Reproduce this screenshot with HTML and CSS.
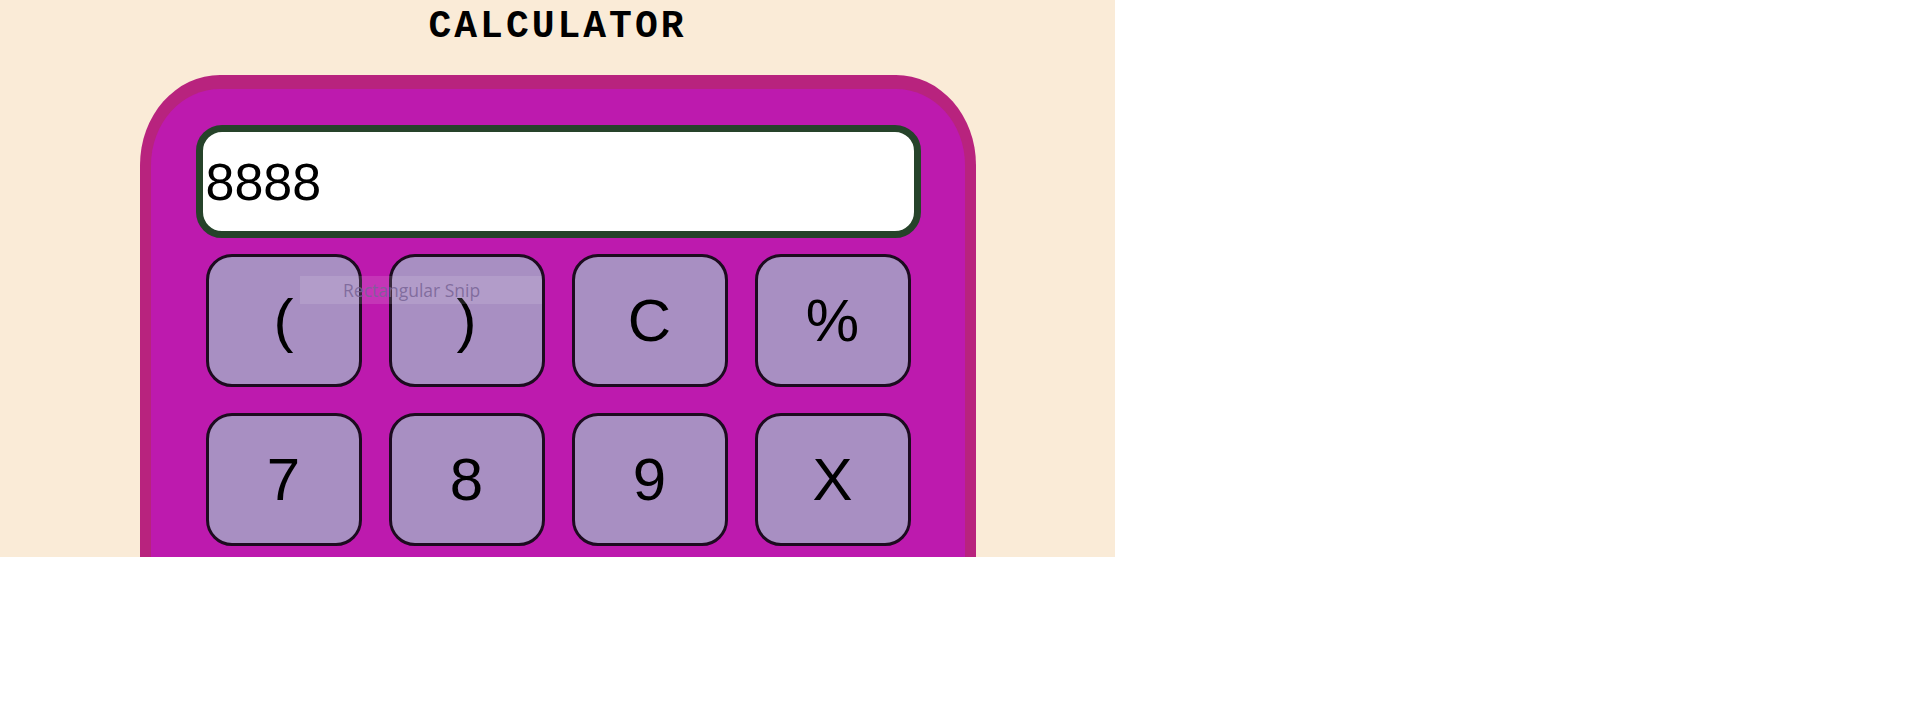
FILE: index.html
```html
<!DOCTYPE html>
<html>
<head>
<meta charset="utf-8">
<title>Calculator</title>
<link rel="stylesheet" href="styles.css">
</head>
<body>
<div class="page">
  <h1 class="title">CALCULATOR</h1>
  <div class="calc">
    <div class="display">8888</div>
    <div class="keys">
      <button class="key">(</button>
      <button class="key">)</button>
      <button class="key">C</button>
      <button class="key">%</button>
      <button class="key">7</button>
      <button class="key">8</button>
      <button class="key">9</button>
      <button class="key">X</button>
    </div>
  </div>
  <div class="snip">Rectangular Snip</div>
</div>
</body>
</html>
```
FILE: styles.css
```css
html, body {
  margin: 0;
  padding: 0;
  background: #ffffff;
}

.page {
  position: relative;
  width: 1115px;
  height: 557px;
  overflow: hidden;
  background: #faebd7;
}

.title {
  margin: 0 0 25px 0;
  padding-top: 4px;
  height: 46px;
  line-height: 46px;
  text-align: center;
  font-family: "Liberation Mono", "Courier New", monospace;
  font-weight: bold;
  font-size: 38px;
  letter-spacing: 3px;
  color: #000;
}

.calc {
  box-sizing: border-box;
  width: 836px;
  height: 700px;
  margin: 0 auto;
  padding: 36px 44px 0 45px;
  background: #bd1aae;
  border: 11px solid #b8237e;
  border-top-width: 14px;
  border-bottom: none;
  border-radius: 80px 80px 0 0 / 90px 90px 0 0;
}

.display {
  box-sizing: border-box;
  height: 113px;
  display: flex;
  align-items: center;
  padding-left: 3px;
  background: #ffffff;
  border: 7px solid #26432a;
  border-radius: 26px;
  font-family: "Liberation Sans", Arial, sans-serif;
  font-size: 52px;
  color: #000;
}

.keys {
  display: grid;
  grid-template-columns: repeat(4, 156px);
  grid-auto-rows: 133px;
  column-gap: 27px;
  row-gap: 26px;
  margin: 16px 10px 0 10px;
}

.key {
  box-sizing: border-box;
  display: flex;
  align-items: center;
  justify-content: center;
  padding: 0;
  margin: 0;
  background: #a88fc2;
  border: 3px solid #1c0b1f;
  border-radius: 26px;
  font-family: "Liberation Sans", Arial, sans-serif;
  font-size: 60px;
  color: #000;
}

.snip {
  position: absolute;
  left: 300px;
  top: 276px;
  width: 242px;
  height: 28px;
  box-sizing: border-box;
  padding-left: 43px;
  background: rgba(255, 255, 255, 0.12);
  font-family: "Open Sans", "Noto Sans", sans-serif;
  font-size: 17.5px;
  line-height: 28px;
  color: rgba(120, 100, 150, 0.85);
}
```
